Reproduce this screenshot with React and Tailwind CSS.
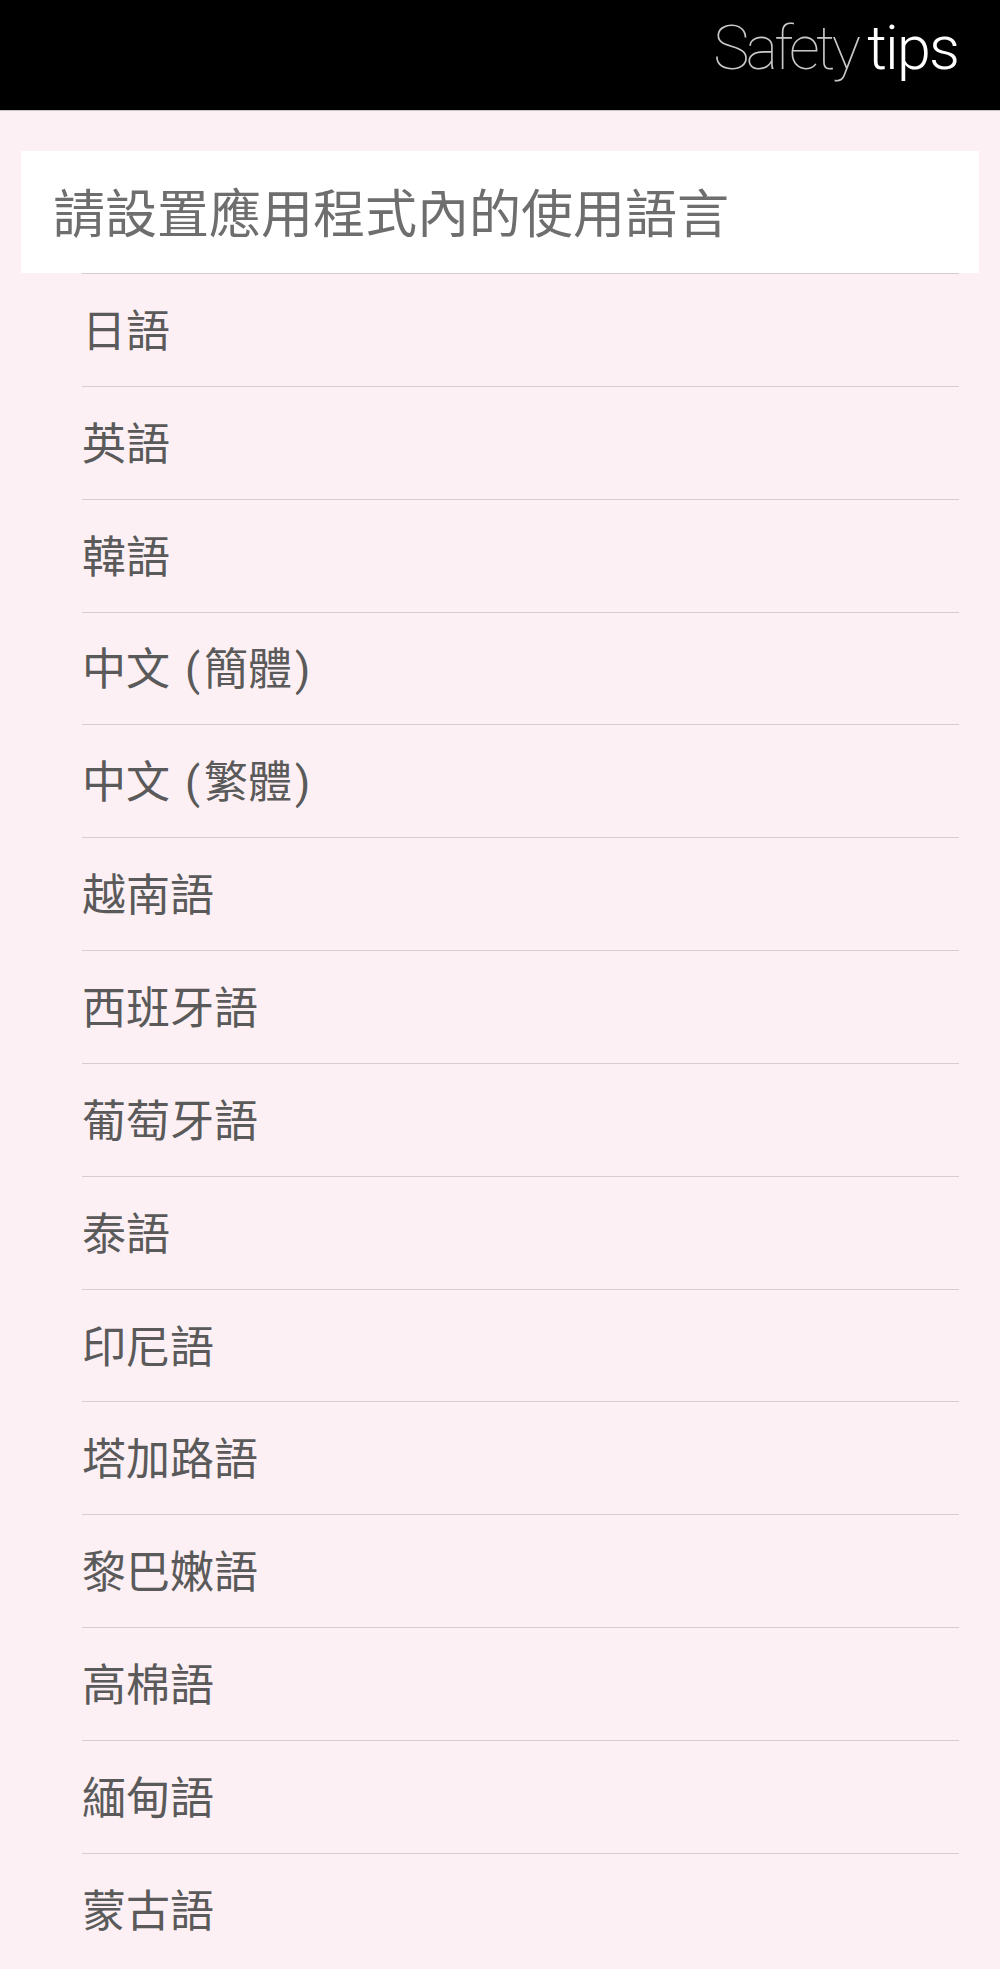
import React from 'react';

const languages = [
    '日語',
    '英語',
    '韓語',
    '中文 (簡體)',
    '中文 (繁體)',
    '越南語',
    '西班牙語',
    '葡萄牙語',
    '泰語',
    '印尼語',
    '塔加路語',
    '黎巴嫩語',
    '高棉語',
    '緬甸語',
    '蒙古語',
];

// Android style: Roboto for latin glyphs, CJK falls through to Noto
const cjk = { fontFamily: '"Noto Sans CJK TC", "Noto Sans", sans-serif' };
const mixed = { fontFamily: 'Roboto, "Noto Sans CJK TC", sans-serif' };

// parens sit a little looser in the original
const Label = ({ text }) => {
    const m = text.match(/^(.*) \((.*)\)$/);
    if (!m) return text;
    return (
        <>
            {m[1]}
            <span className="ml-[15px] mr-[4px]">(</span>
            {m[2]}
            <span className="ml-[3px]">)</span>
        </>
    );
};

const Header = () => (
    <header className="h-[111px] bg-black border-b border-[#c9c4c6] flex items-center justify-end pr-[42px]">
        <div className="flex items-baseline gap-[10px] pb-[14px]" style={{ fontFamily: 'Roboto, "Liberation Sans", sans-serif' }}>
            <span className="text-[61px] font-thin text-[#c8c8c8] tracking-[-0.06em] leading-none">Safety</span>
            <span className="text-[61px] font-light text-white tracking-[-0.03em] leading-none">tips</span>
        </div>
    </header>
);

const App = () => {
    return (
        <div className="min-h-screen bg-[#fdf0f4]" style={cjk}>
            <Header />
            <div className="pt-[40px]">
                <div className="mx-[21px] h-[122px] bg-white flex items-center pl-[32px] pb-[3px]">
                    <h1 className="text-[52px] leading-none text-[#6e6e6e] font-normal">請設置應用程式內的使用語言</h1>
                </div>
                <ul className="ml-[82px] mr-[41px]" style={mixed}>
                    {languages.map((lang) => (
                        <li
                            key={lang}
                            className="h-[112.85px] border-t border-[#d6cdd1] flex items-center text-[44px] leading-none text-[#5a5a5a] pt-[4px]"
                        >
                            <span>
                                <Label text={lang} />
                            </span>
                        </li>
                    ))}
                </ul>
            </div>
        </div>
    );
};

export default App;
